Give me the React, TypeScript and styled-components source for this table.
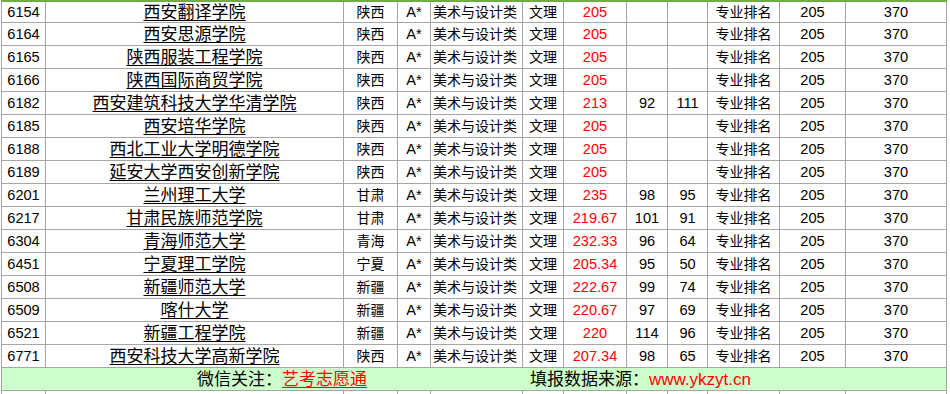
import React from "react";
import styled, { createGlobalStyle } from "styled-components";

type Row = {
  code: string;
  school: string;
  prov: string;
  score: string;
  a?: string;
  b?: string;
};

const rows: Row[] = [
  { code: "6154", school: "西安翻译学院", prov: "陕西", score: "205" },
  { code: "6164", school: "西安思源学院", prov: "陕西", score: "205" },
  { code: "6165", school: "陕西服装工程学院", prov: "陕西", score: "205" },
  { code: "6166", school: "陕西国际商贸学院", prov: "陕西", score: "205" },
  { code: "6182", school: "西安建筑科技大学华清学院", prov: "陕西", score: "213", a: "92", b: "111" },
  { code: "6185", school: "西安培华学院", prov: "陕西", score: "205" },
  { code: "6188", school: "西北工业大学明德学院", prov: "陕西", score: "205" },
  { code: "6189", school: "延安大学西安创新学院", prov: "陕西", score: "205" },
  { code: "6201", school: "兰州理工大学", prov: "甘肃", score: "235", a: "98", b: "95" },
  { code: "6217", school: "甘肃民族师范学院", prov: "甘肃", score: "219.67", a: "101", b: "91" },
  { code: "6304", school: "青海师范大学", prov: "青海", score: "232.33", a: "96", b: "64" },
  { code: "6451", school: "宁夏理工学院", prov: "宁夏", score: "205.34", a: "95", b: "50" },
  { code: "6508", school: "新疆师范大学", prov: "新疆", score: "222.67", a: "99", b: "74" },
  { code: "6509", school: "喀什大学", prov: "新疆", score: "220.67", a: "97", b: "69" },
  { code: "6521", school: "新疆工程学院", prov: "新疆", score: "220", a: "114", b: "96" },
  { code: "6771", school: "西安科技大学高新学院", prov: "陕西", score: "207.34", a: "98", b: "65" },
];

// column widths, each including its 1px right grid line
const cols = "44px 298px 54px 33px 92px 41px 63px 41px 40px 72px 66px 101px";

const App = () => {
  return (
    <>
      <GlobalStyle />
      <Sheet>
        {rows.map((r) => (
          <DataRow key={r.code}>
            <Cell>{r.code}</Cell>
            <Cell $size={17}>
              <Link>{r.school}</Link>
            </Cell>
            <Cell $size={14}>{r.prov}</Cell>
            <Cell>A*</Cell>
            <Cell $size={14} $align="flex-start">美术与设计类</Cell>
            <Cell $size={14}>文理</Cell>
            <Cell $red>{r.score}</Cell>
            <Cell>{r.a}</Cell>
            <Cell>{r.b}</Cell>
            <Cell $size={14}>专业排名</Cell>
            <Cell>205</Cell>
            <Cell>370</Cell>
          </DataRow>
        ))}
        <Footer>
          <FooterPart>
            微信关注：<RedLink>艺考志愿通</RedLink>
          </FooterPart>
          <FooterPart>
            填报数据来源：<Red>www.ykzyt.cn</Red>
          </FooterPart>
        </Footer>
        <StubRow>
          {Array.from({ length: 12 }).map((_, i) => (
            <StubCell key={i} />
          ))}
        </StubRow>
      </Sheet>
    </>
  );
};

export default App;

const GlobalStyle = createGlobalStyle`
  html, body {
    margin: 0;
    padding: 0;
    background: #ffffff;
    overflow: hidden;
  }
  body {
    font-family: "Liberation Sans", "Noto Sans CJK SC", sans-serif;
    color: #000000;
  }
`;

const Sheet = styled.div`
  width: 946px;
  margin-left: 1px;
  border-top: 2px solid #70ad47;
  border-left: 1px solid #a6a6a6;
  box-sizing: border-box;
`;

const DataRow = styled.div`
  display: grid;
  grid-template-columns: ${cols};
  height: 23px;
  box-sizing: border-box;
  border-bottom: 1px solid #a6a6a6;

  &:first-child {
    height: 21px;
  }
`;

const Cell = styled.div<{ $align?: string; $size?: number; $red?: boolean }>`
  display: flex;
  align-items: center;
  justify-content: ${(p) => p.$align || "center"};
  padding: 0 2px;
  box-sizing: border-box;
  border-right: 1px solid #a6a6a6;
  font-size: ${(p) => p.$size || 14.6}px;
  color: ${(p) => (p.$red ? "#ff0000" : "#000000")};
  white-space: nowrap;
  overflow: hidden;
  line-height: 1;
`;

const Link = styled.span`
  text-decoration: underline;
  text-underline-offset: 2px;
`;

const Footer = styled.div`
  display: flex;
  justify-content: center;
  align-items: center;
  gap: 163px;
  height: 23px;
  box-sizing: border-box;
  background: #ccffcc;
  border-right: 1px solid #a6a6a6;
  border-bottom: 1px solid #a6a6a6;
  font-size: 17px;
  line-height: 1;
`;

const FooterPart = styled.span`
  white-space: nowrap;
`;

const Red = styled.span`
  color: #ff0000;
`;

const RedLink = styled(Red)`
  text-decoration: underline;
  text-underline-offset: 2px;
`;

const StubRow = styled.div`
  display: grid;
  grid-template-columns: ${cols};
  height: 4px;
`;

const StubCell = styled.div`
  border-right: 1px solid #a6a6a6;
`;
